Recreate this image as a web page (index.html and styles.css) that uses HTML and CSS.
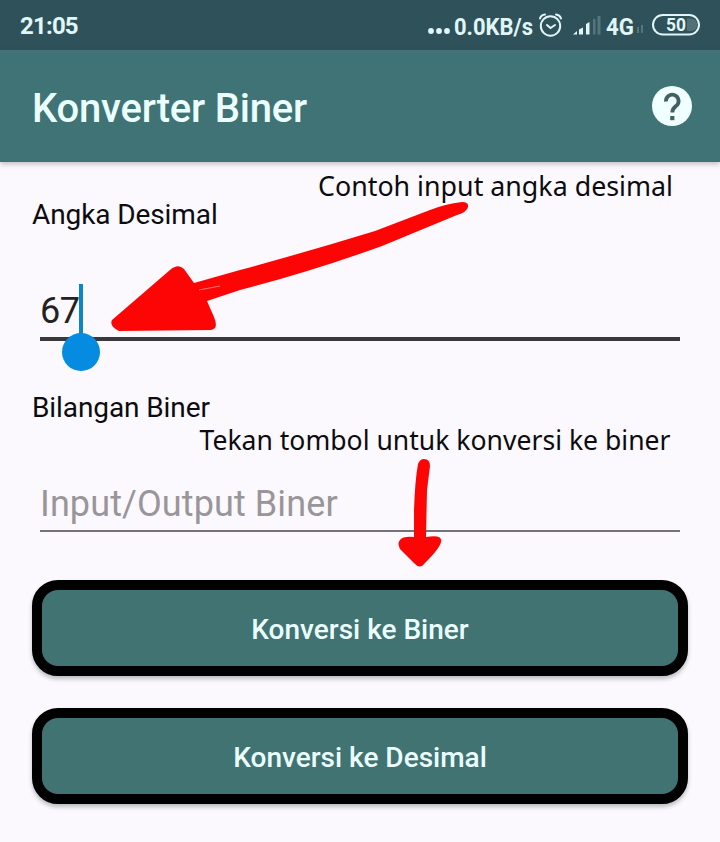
FILE: index.html
```html
<!DOCTYPE html>
<html lang="id">
<head>
<meta charset="utf-8">
<title>Konverter Biner</title>
<link rel="stylesheet" href="styles.css">
</head>
<body>
<div class="screen">
  <div class="status">
    <span class="clock">21:05</span>
    <svg class="status-icons" width="280" height="50" viewBox="0 0 280 50">
      <g fill="#e0f6f8">
        <circle cx="-9" cy="31" r="2.9"/><circle cx="-1" cy="31" r="2.9"/><circle cx="7" cy="31" r="2.9"/>
        <text class="status-text" x="14" y="34.500" textLength="79" lengthAdjust="spacingAndGlyphs">0.0KB/s</text>
        <path d="M133 34.500l4-3.500v3.500zM139 34.500v-5l4-2v7zM146 34.500V24l3.500-2v12.500z"/>
        <path d="M153 19h2.500v15.500H153zM157.500 16h3v18.500h-3z" opacity=".22"/>
        <text class="status-text" x="166" y="34.500" textLength="28" lengthAdjust="spacingAndGlyphs">4G</text>
        <path d="M197 27h2v6h-2zM201 25h2v8h-2z" opacity=".22"/>
      </g>
      <g fill="none" stroke="#e0f6f8" stroke-width="2" stroke-linecap="round">
        <circle cx="110.500" cy="26" r="9.700"/>
        <path d="M107 25l3.500 3 4.500-3M100 18.500q1-3.500 5-4M116 14.500q4 .5 5 4"/>
        <rect x="213" y="15" width="46" height="19.500" rx="9.750"/>
      </g>
      <path d="M247 18.500h4a6 6 0 0 1 0 12.500h-4z" fill="#e0f6f8" opacity=".2"/>
      <text class="battery" x="226" y="30.500" textLength="20" lengthAdjust="spacingAndGlyphs">50</text>
    </svg>
  </div>
  <header class="appbar">
    <h1>Konverter Biner</h1>
    <svg class="help" width="40" height="40" viewBox="0 0 40 40">
      <circle cx="20" cy="20" r="20" fill="#f0ffff"/>
      <path d="M14 15.500a6.300 6.300 0 1 1 11 3.700c-2.800 2.500-4.700 3.300-4.700 7.300" fill="none" stroke="#435f64" stroke-width="3.800"/>
      <path d="M18.200 30h4.200v4.200h-4.200z" fill="#435f64"/>
    </svg>
  </header>
  <main>
    <div class="label">Angka Desimal</div>
    <div class="field focused"><span class="value">67</span><span class="caret"></span></div>
    <div class="label">Bilangan Biner</div>
    <div class="field"><span class="placeholder">Input/Output Biner</span></div>
    <div class="buttons">
      <button>Konversi ke Biner</button>
      <button>Konversi ke Desimal</button>
    </div>
  </main>
  <svg class="notes" width="720" height="842" viewBox="0 0 720 842">
    <text x="318" y="196" textLength="355" lengthAdjust="spacingAndGlyphs">Contoh input angka desimal</text>
    <text x="199.500" y="450" textLength="471" lengthAdjust="spacingAndGlyphs">Tekan tombol untuk konversi ke biner</text>
    <g class="ink">
      <path d="M462 202Q469 202 468 207Q467 212 457 215L382 246Q310 272 240 290L207 301L214 317Q219 329 211 330L119 331Q109 326 112 320L170 270Q178 263 184 269L194 283L240 270Q310 251 375 231L430 210Q445 204 462 202Z"/>
      <path d="M424 459Q430 459 430 466L427 490L426 537Q443 534 441 542Q440 548 425 563Q420 570 414 563L400 549Q397 543 400 540Q403 536 414 537L414 510Q415 480 418 464Q420 459 424 459Z"/>
      <path class="gap" d="M199 290L220 286"/>
    </g>
  </svg>
</div>
</body>
</html>
```
FILE: styles.css
```css
* { box-sizing: border-box; }

body {
  margin: 0;
  background: #fbf9fd;
  font-family: Roboto, sans-serif;
  color: #0c0c10;
}

.screen {
  position: relative;
  width: 720px;
  height: 842px;
  overflow: hidden;
}

.status {
  display: flex;
  justify-content: space-between;
  height: 50px;
  padding-left: 20px;
  background: #2f515a;
  color: #e0f6f8;
}

.clock {
  font-size: 24px;
  font-weight: 700;
  line-height: 53px;
  letter-spacing: -0.8px;
}

.status-icons { overflow: visible; }

.status-text {
  font-size: 24px;
  font-weight: 700;
}

.battery {
  font-size: 18px;
  font-weight: 700;
  fill: #e0f6f8;
}

.appbar {
  display: flex;
  align-items: center;
  justify-content: space-between;
  height: 112px;
  padding: 0 28px 0 32px;
  background: #407375;
  box-shadow: 0 2px 5px rgba(60, 50, 60, 0.3);
  border-top: 2px solid #49717a;
}

.help { margin-bottom: 2px; }

h1 {
  margin: 4px 0 0;
  font-size: 40px;
  font-weight: 500;
  line-height: 48px;
  letter-spacing: -0.2px;
  color: #ebffff;
}

main { padding: 34px 32px 0; }

.label {
  font-size: 28px;
  line-height: 38px;
  letter-spacing: -0.1px;
}

.field {
  display: flex;
  align-items: flex-end;
  height: 105px;
  margin: 0 8px;
  padding-bottom: 1px;
  border-bottom: 2px solid #77727a;
  font-size: 36px;
  line-height: 50px;
}

.focused {
  height: 107px;
  margin-bottom: 48px;
  border-bottom: 4px solid #3b383b;
}

.value { color: #222; letter-spacing: -0.5px; }
.placeholder { color: #99969b; letter-spacing: 0.1px; }

.caret {
  position: relative;
  width: 4px;
  height: 52px;
  background: #0d86c8;
}

.caret::after {
  content: "";
  position: absolute;
  top: 49px;
  left: -17px;
  width: 38px;
  height: 38px;
  border-radius: 50%;
  background: #058be0;
}

.buttons {
  display: grid;
  gap: 32px;
  margin-top: 48px;
}

button {
  height: 96px;
  padding: 3px 6px 0;
  border: 10px solid #000;
  border-radius: 26px;
  background: #417372;
  box-shadow: 0 3px 4px rgba(0, 0, 0, 0.25);
  color: #ebffff;
  font: 500 28px/34px Roboto, sans-serif;
}

.notes {
  position: absolute;
  inset: 0;
}

.notes text {
  font-family: "Noto Sans", sans-serif;
  font-size: 28px;
  fill: #0c0c10;
}

.ink { fill: #fe0505; }
.gap { stroke: #ff7770; stroke-width: 1; }
```
